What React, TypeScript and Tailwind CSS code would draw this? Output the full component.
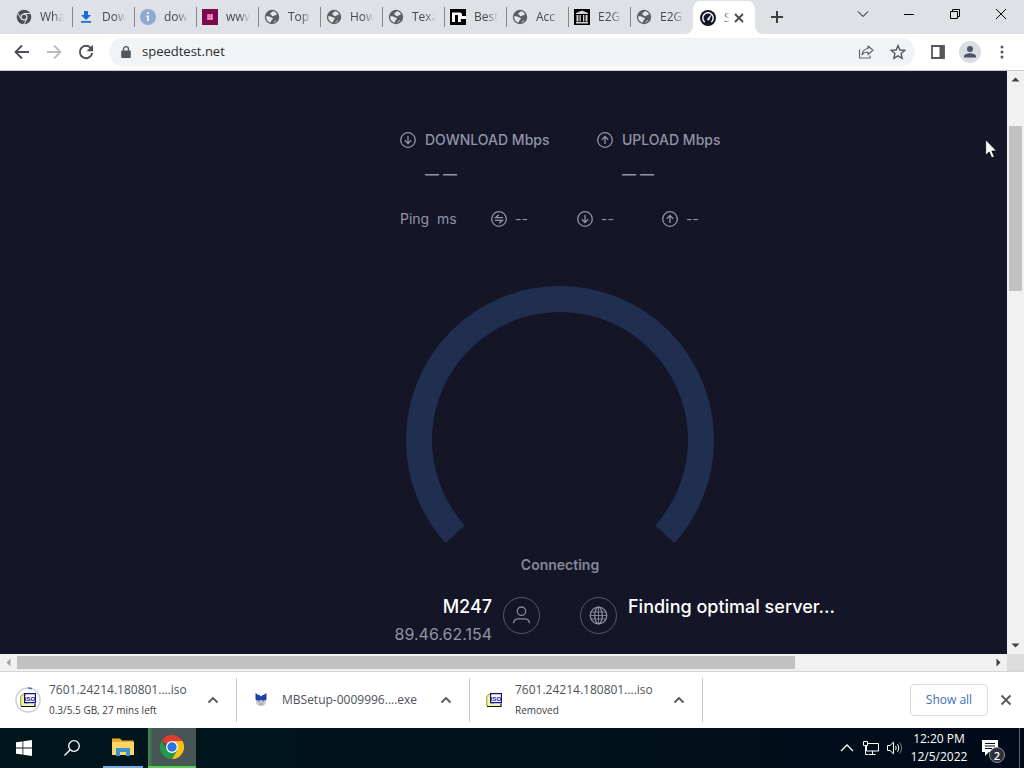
import type { ReactNode } from "react";

const Globe = () => (
  <svg viewBox="0 0 16 16" className="size-4">
    <circle cx="8" cy="8" r="7.2" fill="#5b5f63" />
    <path d="M8.800 2.300c2 .2 3.600 1.500 4.300 3.200-1.300-.1-1.500 1.100-2.600 1-.9-.1-1 .9-2 .8-1-.1-.5-1.100-1.500-1.500-.9-.4-1.100-1.200-.2-1.800.8-.5 1.700-.8 2-1.700z" fill="#e3e5e9" />
    <path d="M2.200 7.300c1.500-.2 3.400.1 4.400.9.8.7 2.200.3 2.300 1.400.1 1-1.300 1-1.500 2-.1.8-.3 1.500-1.100 1.900C3.800 12.700 2.200 10.700 2.100 8.200z" fill="#e3e5e9" />
    <path d="M9 13.700c.2-.8 1.200-.9 1.700-1.400.6-.6.6-1.400 1.700-1.300-.8 1.400-1.900 2.300-3.400 2.700z" fill="#e3e5e9" />
  </svg>
);

const GreyChrome = () => (
  <svg viewBox="0 0 16 16" className="size-4">
    <circle cx="8" cy="8" r="7.300" fill="#4b4f53" />
    <circle cx="8" cy="8" r="3.500" fill="#dfe1e6" />
    <circle cx="8" cy="8" r="2.300" fill="#4b4f53" />
    <path d="M8 4.500h6.500M5 9.700 1.800 4.200M11 9.700 7.800 15.200" stroke="#dfe1e6" strokeWidth="1" />
  </svg>
);

const DownloadFav = () => (
  <svg viewBox="0 0 16 16" className="size-4">
    <path d="M6 2h4v4h3L8 11 3 6h3zM3 12h10v1.700H3z" fill="#1a6be0" />
  </svg>
);

const InfoFav = () => (
  <svg viewBox="0 0 16 16" className="size-4">
    <circle cx="8" cy="8" r="8" fill="#8fa9d3" />
    <path d="M7 3h2v2H7zM6 6.500h3V12H7V8H6z" fill="#e8eefa" />
  </svg>
);

const PinkFav = () => (
  <svg viewBox="0 0 16 16" className="size-4">
    <path d="M0 0h16v16H0z" fill="#780c4e" />
    <path d="M5 5h6v6H5z" fill="#e04c9c" />
    <path d="M5 7h6M5 9.500h6M7 5v6M9.500 5v6" stroke="#f8b2da" strokeWidth=".7" />
  </svg>
);

const BlackFav = () => (
  <svg viewBox="0 0 16 16" className="size-4">
    <path d="M0 0h16v16H0z" fill="#000" />
    <path d="M2 3.500h8.500L12 5v2h4v3h-5.200V13H8V6H5v7H2z" fill="#fff" />
    <path d="M12.500 4.500H16V7h-3.500z" fill="#000" />
  </svg>
);

const ArchiveFav = () => (
  <svg viewBox="0 0 16 16" className="size-4">
    <path d="M0 0h16v16H0z" fill="#000" />
    <path d="M8 1.500 14 4v1H2V4zM2.500 6h2v6.500h-2zM5.500 6h1.300v6.500H5.500zM9 6h1.300v6.500H9zM11.500 6h2v6.500h-2zM2 13h12v1.500H2z" fill="#d2d2d2" />
  </svg>
);

const SpeedFav = () => (
  <svg viewBox="0 0 16 16" className="size-4">
    <circle cx="8" cy="8" r="8" fill="#141526" />
    <path d="M4.700 12A5.200 5.200 0 1 1 11.300 12" fill="none" stroke="#fff" strokeWidth="1.400" />
    <path d="m7.200 9.500 3.600-4.200-2 5z" fill="#fff" stroke="#fff" strokeWidth=".7" />
  </svg>
);

const tabs: { title: string; icon: ReactNode }[] = [
  { title: "Wha", icon: <GreyChrome /> },
  { title: "Dow", icon: <DownloadFav /> },
  { title: "dow", icon: <InfoFav /> },
  { title: "www", icon: <PinkFav /> },
  { title: "Top", icon: <Globe /> },
  { title: "How", icon: <Globe /> },
  { title: "Texa", icon: <Globe /> },
  { title: "Best", icon: <BlackFav /> },
  { title: "Acc", icon: <Globe /> },
  { title: "E2G", icon: <ArchiveFav /> },
  { title: "E2G", icon: <Globe /> },
];

function TabStrip() {
  return (
    <header className="flex h-[34px] shrink-0 bg-[#dee1e6] pl-[11px]">
      <nav className="flex" aria-label="Tabs">
        {tabs.map((t, i) => (
          <button key={i} className="group flex w-[62px] items-center">
            <span className="flex h-5 w-full items-center gap-2 border-r border-[#85888d] pl-[5px] group-last-of-type:border-transparent">
              {t.icon}
              <span className="w-6 whitespace-nowrap text-left text-xs text-[#45494d] [mask-image:linear-gradient(to_right,black_55%,transparent)]">
                {t.title}
              </span>
            </span>
          </button>
        ))}
        <div className="relative mt-[1px] flex w-[62px] items-center rounded-t-lg bg-white pl-[7px]">
          <svg viewBox="0 0 8 8" className="absolute -left-2 bottom-0 size-2"><path d="M8 0v8H0a8 8 0 0 0 8-8" fill="#fff" /></svg>
          <svg viewBox="0 0 8 8" className="absolute -right-2 bottom-0 size-2"><path d="M0 0v8h8a8 8 0 0 1-8-8" fill="#fff" /></svg>
          <SpeedFav />
          <span className="ml-2 w-[6px] text-xs text-[#45494d] [mask-image:linear-gradient(to_right,black,transparent)]">S</span>
          <button aria-label="Close tab" className="ml-[1px] grid size-4 place-items-center">
            <svg viewBox="0 0 10 10" className="size-[10px]"><path d="m1 1 8 8M9 1 1 9" stroke="#45494d" strokeWidth="1.800" /></svg>
          </button>
        </div>
      </nav>
      <button aria-label="New tab" className="ml-2 grid w-7 place-items-center">
        <svg viewBox="0 0 12 12" className="size-3"><path d="M6 0v12M0 6h12" stroke="#3c4043" strokeWidth="2" /></svg>
      </button>
      <div className="ml-auto flex h-7 text-black">
        <button aria-label="Search tabs" className="grid w-[46px] place-items-center">
          <svg viewBox="0 0 12 12" className="size-3"><path d="m1 3.500 5 5 5-5" fill="none" stroke="currentColor" /></svg>
        </button>
        <button aria-label="Minimize" className="grid w-[46px] place-items-center">
          <svg viewBox="0 0 10 10" className="size-[10px]"><path d="M0 5.500h10" stroke="currentColor" /></svg>
        </button>
        <button aria-label="Restore" className="grid w-[46px] place-items-center">
          <svg viewBox="0 0 10 10" className="size-[10px]"><path d="M.5 2.500h7v7h-7zM2.500 2.500v-2h7v7h-2" fill="none" stroke="currentColor" /></svg>
        </button>
        <button aria-label="Close" className="grid w-[46px] place-items-center">
          <svg viewBox="0 0 10 10" className="size-[10px]"><path d="m0 0 10 10M10 0 0 10" stroke="currentColor" /></svg>
        </button>
      </div>
    </header>
  );
}

function ToolButton({ label, children }: { label: string; children: ReactNode }) {
  return (
    <button aria-label={label} className="grid size-7 shrink-0 place-items-center">
      {children}
    </button>
  );
}

function Toolbar() {
  return (
    <div className="flex h-[37px] shrink-0 items-center gap-1 border-b border-[#c9cbce] bg-white px-2">
      <ToolButton label="Back">
        <svg viewBox="0 0 16 16" className="size-4"><path d="M15 8H2M8 1.500 1.500 8 8 14.500" fill="none" stroke="#4c5054" strokeWidth="1.800" /></svg>
      </ToolButton>
      <ToolButton label="Forward">
        <svg viewBox="0 0 16 16" className="size-4"><path d="M1 8h13M8 1.500 14.500 8 8 14.500" fill="none" stroke="#b9bbbe" strokeWidth="1.800" /></svg>
      </ToolButton>
      <ToolButton label="Reload">
        <svg viewBox="0 0 16 16" className="size-4"><path d="M13 4.200A6.200 6.200 0 1 0 14.200 9" fill="none" stroke="#4c5054" strokeWidth="1.900" /><path d="M15 .8v6.400H8.600z" fill="#4c5054" /></svg>
      </ToolButton>
      <div className="mx-[5px] flex h-7 flex-1 items-center rounded-full bg-[#f1f3f4] pl-3">
        <svg viewBox="0 0 10 12" className="h-3 w-[10px]"><path d="M1 4.500h8a.8.8 0 0 1 .8.800v5.700a.9.900 0 0 1-.8.900H1a.9.900 0 0 1-.8-.9V5.300A.8.800 0 0 1 1 4.500z" fill="#54585c" /><path d="M2.500 5V3.200a2.500 2.500 0 0 1 5 0V5" fill="none" stroke="#54585c" strokeWidth="1.300" /></svg>
        <input aria-label="Address" defaultValue="speedtest.net" className="ml-[11px] min-w-0 flex-1 bg-transparent text-[13px] text-[#2c2e31] outline-none" />
        <div className="mr-[3px] flex gap-1">
          <ToolButton label="Share">
            <svg viewBox="0 0 16 16" className="size-4"><path d="M1.500 5.500v8.500h10.500v-2.500M10 2l5 4.300-5 4.200V8c-2.800 0-4.600.8-6 2.700C4.600 7.200 6.600 5 10 4.500z" fill="none" stroke="#5f6368" strokeWidth="1.200" strokeLinejoin="round" /></svg>
          </ToolButton>
          <ToolButton label="Bookmark">
            <svg viewBox="0 0 16 16" className="size-4"><path d="m8 1.600 1.900 4.400 4.800.4-3.600 3.200 1.100 4.700L8 11.800l-4.200 2.500 1.100-4.700L1.300 6.400 6.100 6z" fill="none" stroke="#54585c" strokeWidth="1.400" /></svg>
          </ToolButton>
        </div>
      </div>
      <ToolButton label="Side panel">
        <svg viewBox="0 0 14 14" className="size-[14px]"><path d="M1 1h12v12H1z" fill="none" stroke="#54585c" strokeWidth="1.800" /><path d="M8.500 1H13v12H8.500z" fill="#54585c" /></svg>
      </ToolButton>
      <ToolButton label="Profile">
        <svg viewBox="0 0 22 22" className="size-[22px]"><circle cx="11" cy="11" r="11" fill="#dadde1" /><circle cx="11" cy="8" r="3" fill="#4b5566" /><path d="M5 16.500v-1.200c0-2 3.500-3 6-3s6 1 6 3v1.200z" fill="#4b5566" /></svg>
      </ToolButton>
      <ToolButton label="Menu">
        <svg viewBox="0 0 4 14" className="h-[14px] w-1"><circle cx="2" cy="2" r="1.500" fill="#54585c" /><circle cx="2" cy="7" r="1.500" fill="#54585c" /><circle cx="2" cy="12" r="1.500" fill="#54585c" /></svg>
      </ToolButton>
    </div>
  );
}

function CircleIcon({ kind }: { kind: "down" | "up" | "swap" }) {
  return (
    <svg viewBox="0 0 16 16" className="size-4 shrink-0" fill="none" stroke="#9193a8" strokeWidth="1.300">
      <circle cx="8" cy="8" r="7.300" />
      {kind === "down" && <path d="M8 4v7.500M4.800 8.300 8 11.500l3.200-3.200" />}
      {kind === "up" && <path d="M8 12V4.500M4.800 7.700 8 4.500l3.200 3.200" />}
      {kind === "swap" && <path d="M12 6.700H4.500L7.800 3.700M4 9.300h7.500L8.200 12.300" />}
    </svg>
  );
}

function Speed({ kind, name }: { kind: "down" | "up"; name: string }) {
  return (
    <div className="grid grid-cols-[16px_1fr] items-center gap-x-[9px] whitespace-nowrap">
      <CircleIcon kind={kind} />
      <h2 className="text-sm leading-5 font-medium">{name} Mbps</h2>
      <p className="col-start-2 mt-3 flex gap-1 text-sm leading-6 font-semibold"><span>—</span><span>—</span></p>
    </div>
  );
}

function SpeedTest() {
  return (
    <main className="relative min-w-0 flex-1 overflow-hidden bg-[#141526] font-['Inter',sans-serif] text-[#9193a8]">
      <div className="min-w-[1120px] pt-[59px]">
        <div className="mx-auto w-[320px]">
          <div className="grid grid-cols-[197px_1fr]">
            <Speed kind="down" name="DOWNLOAD" />
            <Speed kind="up" name="UPLOAD" />
          </div>
          <div className="mt-[23px] flex h-5 items-center text-sm">
            <span className="w-[91px]">Ping&nbsp; ms</span>
            <span className="flex w-[86px] items-center gap-2"><CircleIcon kind="swap" />--</span>
            <span className="flex w-[85px] items-center gap-2"><CircleIcon kind="down" />--</span>
            <span className="flex items-center gap-2"><CircleIcon kind="up" />--</span>
          </div>
        </div>
        <svg viewBox="0 0 308 257" className="mx-auto mt-[57px] h-[257px] w-[308px]">
          <path d="M49.200 248.300A141 141 0 1 1 258.800 248.300" fill="none" stroke="#202f50" strokeWidth="26" />
        </svg>
        <p className="mt-3 text-center text-sm leading-5 font-semibold text-[#85879a]">Connecting</p>
        <div className="mt-[22px] flex gap-10">
          <div className="flex flex-1 justify-end gap-[11px] text-right">
            <div>
              <h3 className="text-lg leading-5 font-medium text-white">M247</h3>
              <p className="mt-[7px] text-base leading-5">89.46.62.154</p>
            </div>
            <svg viewBox="0 0 37 37" className="size-[37px]" fill="none" stroke="#85879a">
              <circle cx="18.500" cy="18.500" r="18" stroke="#55576a" />
              <circle cx="18.500" cy="14.200" r="4.200" strokeWidth="1.300" />
              <path d="M10.500 26.300c.2-3 2.300-4.500 5-4.500h6c2.700 0 4.800 1.500 5 4.500" strokeWidth="1.300" />
            </svg>
          </div>
          <div className="flex flex-1 gap-[11px]">
            <svg viewBox="0 0 37 37" className="size-[37px]" fill="none" stroke="#9193a8" strokeWidth="1.200">
              <circle cx="18.500" cy="18.500" r="18" stroke="#55576a" strokeWidth="1" />
              <circle cx="18.500" cy="18.500" r="8.300" />
              <ellipse cx="18.500" cy="18.500" rx="3.800" ry="8.300" />
              <path d="M11.500 15h14M10 18.500h17M11.500 22h14M18.500 10v17" strokeWidth=".8" />
            </svg>
            <h3 className="text-lg leading-5 font-medium text-white">Finding optimal server...</h3>
          </div>
        </div>
      </div>
      <svg viewBox="0 0 12 20" className="absolute top-[68px] right-[10px] h-5 w-3">
        <path d="M.7.8v15.400l3.500-3.300 2.500 5.900 2.600-1.100-2.500-5.700h4.700z" fill="#fff" stroke="#000" strokeWidth=".7" />
      </svg>
    </main>
  );
}

function Arrow({ dir, muted }: { dir: "up" | "down" | "left" | "right"; muted?: boolean }) {
  const d = { up: "M4.500 10.500h8L8.500 6.500z", down: "M4.500 6.500h8L8.500 10.500z", left: "M10.500 4.500v8L6.500 8.500z", right: "M6.500 4.500v8L10.500 8.500z" }[dir];
  return (
    <button aria-label={`Scroll ${dir}`} className="size-[17px] shrink-0">
      <svg viewBox="0 0 17 17" className="size-[17px]"><path d={d} fill={muted ? "#a3a3a3" : "#404040"} /></svg>
    </button>
  );
}

function IsoIcon() {
  return (
    <svg viewBox="0 0 16 16" className="size-4">
      <path d="M.6 4.500 3 2h4v11.500H.6z" fill="#dfe56a" stroke="#8c9a2c" strokeWidth=".8" />
      <path d="M2 4.500h2.500V12H14v2H2z" fill="#f4f7b4" />
      <path d="M1 14.500h14v-3" fill="none" stroke="#111" strokeWidth="1.200" />
      <path d="M4.600 1.600h10.800v9H4.600z" fill="#fff" stroke="#10108c" strokeWidth="1.200" />
      <text x="10" y="8.600" textAnchor="middle" fontSize="6" fontWeight="700" fill="#10108c" fontFamily="Liberation Sans, sans-serif">ISO</text>
    </svg>
  );
}

function Download({ icon, name, status }: { icon: ReactNode; name: string; status?: string }) {
  return (
    <li className="flex h-11 w-[233px] items-center border-r border-[#c8cacd] pl-[11px]">
      <span className="relative grid size-[26px] shrink-0 place-items-center">{icon}</span>
      <div className="ml-2 min-w-0 flex-1 whitespace-nowrap">
        <p className="text-xs leading-5 text-[#4e5257]">{name}</p>
        {status && <p className="text-[10px] leading-5 text-[#3c4043]">{status}</p>}
      </div>
      <button aria-label={`Options for ${name}`} className="mr-[9px] grid size-7 shrink-0 place-items-center">
        <svg viewBox="0 0 12 8" className="h-2 w-3"><path d="m1.500 6.500 4.500-4.500 4.500 4.500" fill="none" stroke="#54585c" strokeWidth="1.800" /></svg>
      </button>
    </li>
  );
}

function DownloadShelf() {
  return (
    <section aria-label="Downloads" className="flex h-[57px] shrink-0 items-center border-t border-[#d5d7da] bg-white pl-1">
      <ul className="flex">
        <Download
          name="7601.24214.180801....iso"
          status="0.3/5.5 GB, 27 mins left"
          icon={
            <>
              <svg viewBox="0 0 26 26" className="absolute inset-0 size-[26px]" fill="none" strokeWidth="1.500">
                <circle cx="13" cy="13" r="12" stroke="#c6d0e2" />
                <path d="M13 1a12 12 0 0 1 4 .7" stroke="#4a74c4" />
              </svg>
              <IsoIcon />
            </>
          }
        />
        <Download
          name="MBSetup-0009996....exe"
          icon={
            <svg viewBox="0 0 16 16" className="size-4">
              <path d="M3 7h10v3.500c0 2-2.500 3.500-5 3.500s-5-1.500-5-3.500z" fill="#c9ced6" />
              <path d="M2.500 1 5.500 3h1L8 4.500 9.500 3h1l3-2v6c0 1.500-3 2-5.500 1-2.500 1-5.500.5-5.500-1z" fill="#1d3fae" />
              <path d="M5 9.500h2M9 9.500h2M6 12h4" stroke="#8a8f98" />
            </svg>
          }
        />
        <Download name="7601.24214.180801....iso" status="Removed" icon={<IsoIcon />} />
      </ul>
      <button className="mr-1 ml-auto h-8 w-[78px] rounded border border-[#d7dadf] text-xs font-medium text-[#3f6dbb]">Show all</button>
      <button aria-label="Close downloads" className="mr-1 grid size-7 place-items-center">
        <svg viewBox="0 0 12 12" className="size-3"><path d="m1.500 1.500 9 9M10.500 1.500l-9 9" stroke="#54585c" strokeWidth="1.800" /></svg>
      </button>
    </section>
  );
}

function Taskbar() {
  return (
    <footer className="flex h-10 shrink-0 bg-linear-to-r from-[#01161c] via-[#01131b] to-[#010a1a] text-white">
      <button aria-label="Start" className="grid w-12 place-items-center">
        <svg viewBox="0 0 16 16" className="size-4"><path d="m0 2.300 6.500-.9v6.100H0zM7.300 1.300 16 0v7.500H7.300zM0 8.400h6.500v6.200L0 13.700zM7.300 8.400H16V16l-8.700-1.200z" fill="#fff" /></svg>
      </button>
      <button aria-label="Search" className="grid w-12 place-items-center">
        <svg viewBox="0 0 16 16" className="size-4"><circle cx="10" cy="6" r="5.300" fill="none" stroke="#fff" strokeWidth="1.300" /><path d="M6.200 9.800.5 15.500" stroke="#fff" strokeWidth="1.300" /></svg>
      </button>
      <button aria-label="File Explorer" className="ml-[7px] grid w-10 place-items-center border-b-2 border-[#76a9e4]">
        <svg viewBox="0 0 22 20" className="h-5 w-[22px]"><path d="M0 1.500h8l2 2h11.500V18H0z" fill="#e8a92c" /><path d="M0 5h22v13H0z" fill="#fcd667" /><path d="M4 11h14v8h-4v-4H8v4H4z" fill="#3d92cb" /></svg>
      </button>
      <button aria-label="Google Chrome" className="ml-[5px] grid w-12 place-items-center border-b-2 border-[#4fd04f] bg-[#475556] bg-linear-to-r from-[#4c8a50] to-transparent to-10%">
        <svg viewBox="0 0 24 24" className="size-6">
          <path d="M12 12 1.600 6A12 12 0 0 1 22.400 6z" fill="#e33b2e" />
          <path d="M12 6h10.400A12 12 0 0 1 12 24l5.200-9z" fill="#fbc116" />
          <path d="M1.600 6A12 12 0 0 0 12 24l5.200-9H6.800z" fill="#229a4b" />
          <circle cx="12" cy="12" r="6" fill="#fff" />
          <circle cx="12" cy="12" r="4.700" fill="#2b74e2" />
        </svg>
      </button>
      <div className="ml-auto flex items-center">
        <button aria-label="Show hidden icons" className="grid w-6 place-items-center">
          <svg viewBox="0 0 14 8" className="h-2 w-[14px]"><path d="m1 7 6-6 6 6" fill="none" stroke="#fff" strokeWidth="1.300" /></svg>
        </button>
        <button aria-label="Network" className="grid w-6 place-items-center">
          <svg viewBox="0 0 16 14" className="h-[14px] w-4" fill="none" stroke="#fff"><path d="M5 2.500h10.500v7.500H3.500V5M9.500 10v3.500M5.500 13.500h7M.5.500h4v4h-4zM2.500 4.500v9H5" /></svg>
        </button>
        <button aria-label="Volume" className="grid w-6 place-items-center">
          <svg viewBox="0 0 16 14" className="h-[14px] w-4" fill="none" stroke="#fff"><path d="M.5 4.500H3l3.500-3.300v11.600L3 9.500H.5z" /><path d="M8.500 5c.8 1.200.8 2.800 0 4M10.500 3.300c1.600 2.200 1.600 5.200 0 7.400" /><path d="M12.700 1.500c2.400 3.200 2.400 7.800 0 11" stroke="#7b828c" /></svg>
        </button>
        <time className="w-16 text-center text-xs leading-[18px]">12:20 PM<br />12/5/2022</time>
        <button aria-label="Notifications" className="relative ml-[11px] h-10 w-[37px]">
          <svg viewBox="0 0 16 16" className="absolute top-3 left-0 size-4"><path d="M0 0h16v12H7l-4 4v-4H0z" fill="#fff" /><path d="M3 3.500h10M3 6h10M3 8.500h7" stroke="#010a1a" /></svg>
          <span className="absolute top-[19px] left-[7px] grid size-4 place-items-center rounded-full border border-[#8b8f96] bg-[#2b313a] text-[11px] leading-none font-semibold">2</span>
        </button>
        <span className="mr-1 h-10 w-px bg-[#5a616b]" />
      </div>
    </footer>
  );
}

export default function App() {
  return (
    <div className="flex h-screen flex-col overflow-hidden bg-white font-['Open_Sans','Noto_Sans',sans-serif]">
      <TabStrip />
      <Toolbar />
      <div className="flex min-h-0 flex-1">
        <SpeedTest />
        <div className="flex w-[17px] shrink-0 flex-col bg-[#f1f1f1]">
          <Arrow dir="up" />
          <div className="min-h-0 flex-1">
            <div className="h-[7%]" />
            <div className="mx-[2px] h-[30%] bg-[#c1c1c1]" />
          </div>
          <Arrow dir="down" />
        </div>
      </div>
      <div className="flex h-[17px] shrink-0 bg-[#f1f1f1]">
        <Arrow dir="left" muted />
        <div className="flex-1 py-[2px]"><div className="h-full w-4/5 bg-[#c1c1c1]" /></div>
        <Arrow dir="right" />
        <div className="w-[17px] bg-[#dcdcdc]" />
      </div>
      <DownloadShelf />
      <Taskbar />
    </div>
  );
}
